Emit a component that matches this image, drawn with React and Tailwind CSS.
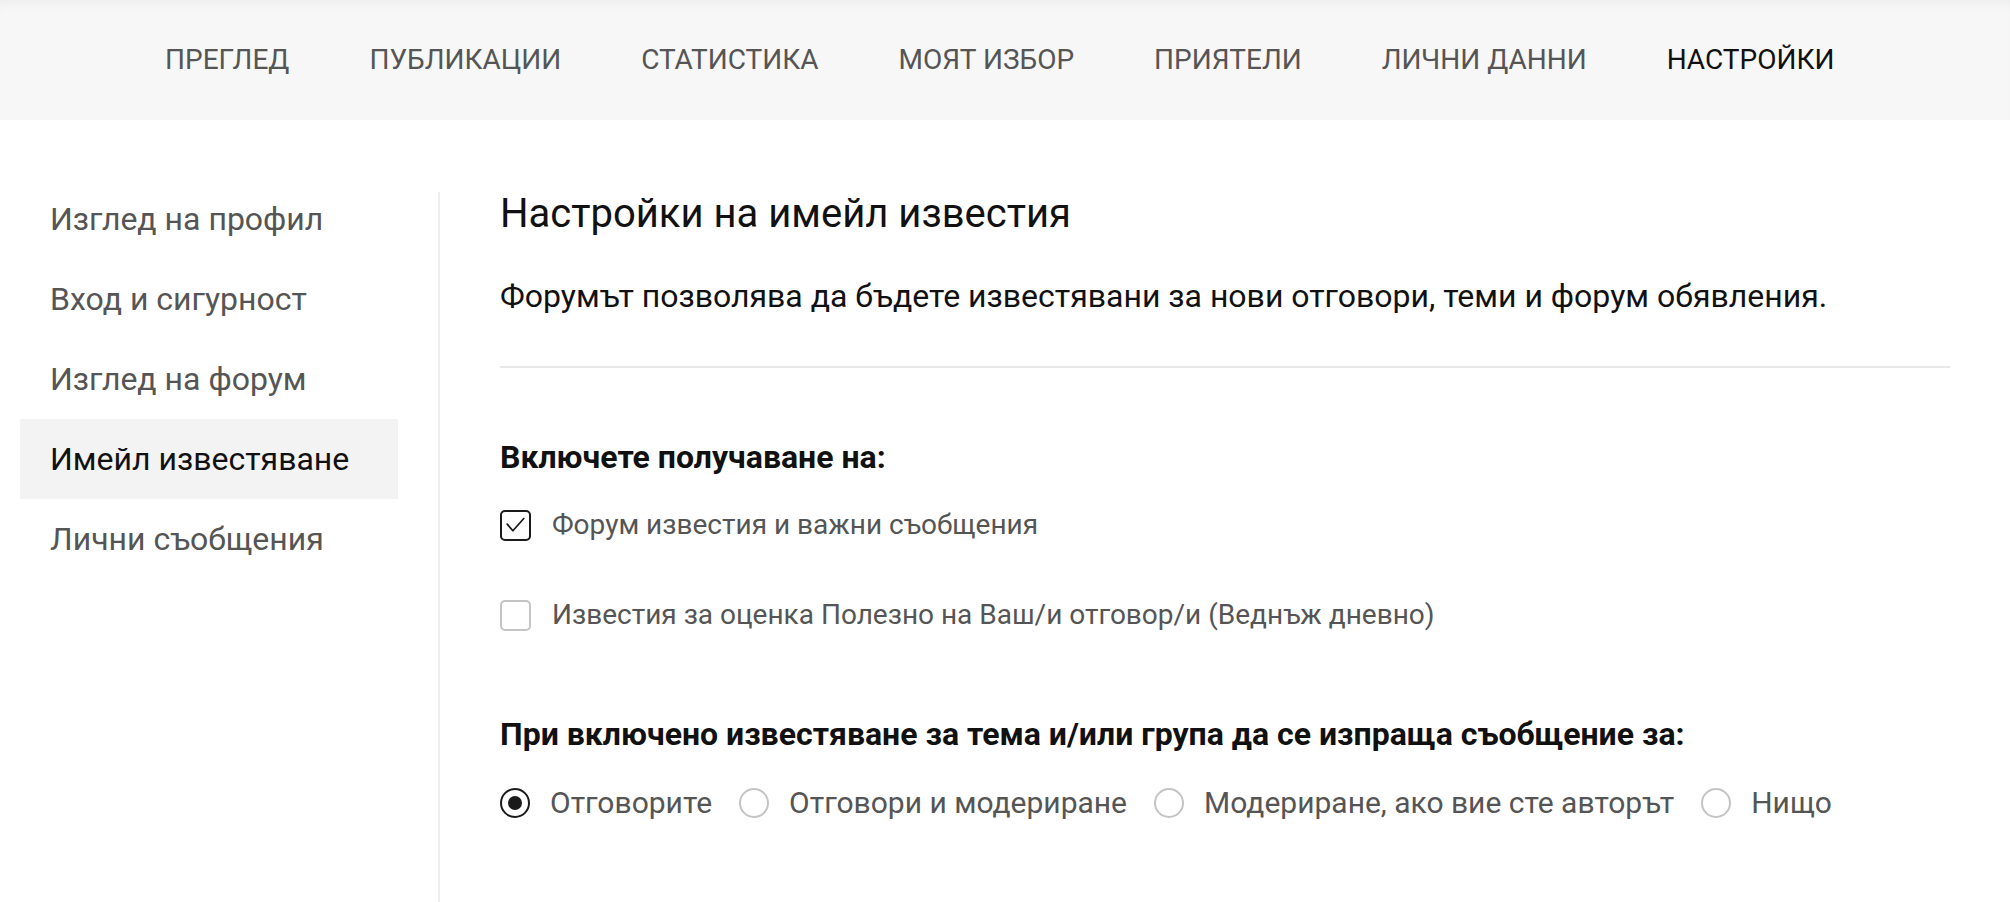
import { useState } from "react";

const tabs = ["ПРЕГЛЕД", "ПУБЛИКАЦИИ", "СТАТИСТИКА", "МОЯТ ИЗБОР", "ПРИЯТЕЛИ", "ЛИЧНИ ДАННИ", "НАСТРОЙКИ"];
const menu = ["Изглед на профил", "Вход и сигурност", "Изглед на форум", "Имейл известяване", "Лични съобщения"];
const radios = ["Отговорите", "Отговори и модериране", "Модериране, ако вие сте авторът", "Нищо"];

const Checkbox = ({ checked, onClick, label }) => (
  <label className="flex items-center h-[40px] cursor-pointer" onClick={onClick}>
    <span
      className={
        "w-[31px] h-[31px] rounded-[5px] border-2 flex items-center justify-center shrink-0 " +
        (checked ? "border-[#1a1a1a]" : "border-[#c4c4c4]")
      }
    >
      {checked && (
        <svg width="31" height="31" viewBox="0 0 31 31" fill="none">
          <polyline points="6,14 12.5,21.5 25,7.5" stroke="#1a1a1a" strokeWidth="2" strokeLinecap="round" strokeLinejoin="round" />
        </svg>
      )}
    </span>
    <span className="ml-[21px] text-[28px] leading-[40px] text-[#555]">{label}</span>
  </label>
);

const Radio = ({ checked, onClick, label }) => (
  <label className="flex items-center h-[40px] cursor-pointer mr-[27px]" onClick={onClick}>
    <span
      className={
        "w-[30px] h-[30px] rounded-full border-2 flex items-center justify-center shrink-0 " +
        (checked ? "border-[#1a1a1a]" : "border-[#c4c4c4]")
      }
    >
      {checked && <span className="w-[14px] h-[14px] rounded-full bg-[#1a1a1a]"></span>}
    </span>
    <span className="ml-[20px] text-[30px] leading-[40px] text-[#555]">{label}</span>
  </label>
);

const App = () => {
  const [active] = useState(3);
  const [forum, setForum] = useState(true);
  const [useful, setUseful] = useState(false);
  const [radio, setRadio] = useState(0);

  return (
    <div className="min-h-screen bg-white font-['Roboto',sans-serif]">
      {/* top tabs */}
      <div className="h-[120px] bg-[#f7f7f7] shadow-[inset_0_10px_14px_-10px_rgba(0,0,0,0.07)] flex items-center pl-[165px] gap-[80px]">
        {tabs.map((t, i) => (
          <span
            key={t}
            className={"text-[28px] leading-[40px] " + (i === tabs.length - 1 ? "text-[#111]" : "text-[#555]")}
          >
            {t}
          </span>
        ))}
      </div>

      <div className="flex pt-[59px] pr-[60px]">
        {/* left menu */}
        <div className="w-[378px] ml-[20px] shrink-0">
          {menu.map((m, i) => (
            <div
              key={m}
              className={
                "h-[80px] flex items-center pl-[30px] text-[32px] " +
                (i === active ? "bg-[#f3f3f3] text-[#111]" : "text-[#555]")
              }
            >
              {m}
            </div>
          ))}
        </div>

        {/* content */}
        <div className="ml-[40px] mt-[13px] border-l-2 border-[#eeeeee] pl-[60px] grow min-h-[710px]">
          <h1 className="text-[40px] leading-[44px] text-[#111] font-normal">Настройки на имейл известия</h1>
          <p className="mt-[36px] text-[32px] leading-[48px] text-[#111]">
            Форумът позволява да бъдете известявани за нови отговори, теми и форум обявления.
          </p>
          <div className="mt-[46px] h-[2px] bg-[#e8e8e8]"></div>

          <div className="mt-[69px] text-[32px] leading-[40px] font-bold text-[#111]">Включете получаване на:</div>
          <div className="mt-[28px]">
            <Checkbox checked={forum} onClick={() => setForum(!forum)} label="Форум известия и важни съобщения" />
          </div>
          <div className="mt-[50px]">
            <Checkbox
              checked={useful}
              onClick={() => setUseful(!useful)}
              label="Известия за оценка Полезно на Ваш/и отговор/и (Веднъж дневно)"
            />
          </div>

          <div className="mt-[79px] text-[32px] leading-[40px] font-bold text-[#111]">
            При включено известяване за тема и/или група да се изпраща съобщение за:
          </div>
          <div className="mt-[29px] flex items-center">
            {radios.map((r, i) => (
              <Radio key={r} checked={radio === i} onClick={() => setRadio(i)} label={r} />
            ))}
          </div>
        </div>
      </div>
    </div>
  );
};

export default App;
